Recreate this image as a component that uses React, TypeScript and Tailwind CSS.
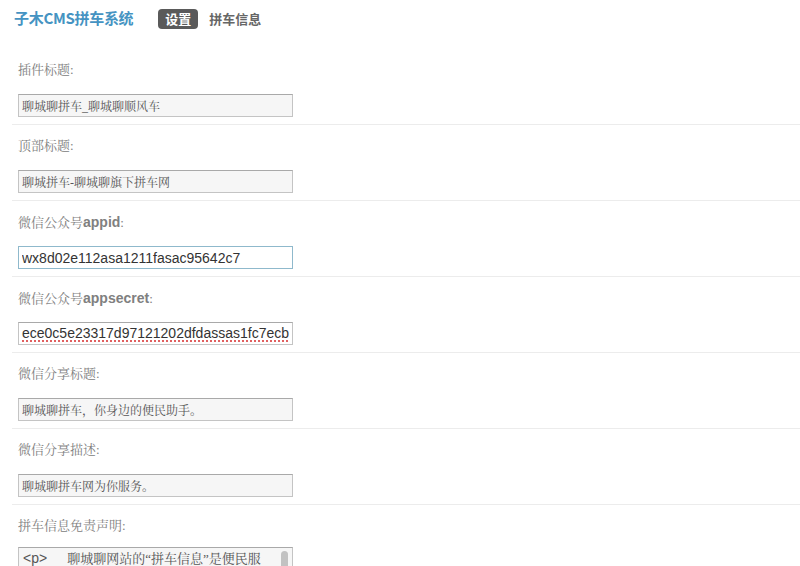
import React, { useState } from 'react';

const cjk = { fontFamily: '"Liberation Serif", "Noto Serif CJK SC", "Noto Sans CJK SC", serif' };

type Field = {
  label: React.ReactNode;
  value: string;
  kind?: 'plain' | 'focus' | 'spell';
};

const fields: Field[] = [
  { label: '插件标题:', value: '聊城聊拼车_聊城聊顺风车' },
  { label: '顶部标题:', value: '聊城拼车-聊城聊旗下拼车网' },
  {
    label: (
      <>
        微信公众号<span className="font-bold text-[14px] font-['Liberation_Sans',sans-serif]">appid</span>:
      </>
    ),
    value: 'wx8d02e112asa1211fasac95642c7',
    kind: 'focus',
  },
  {
    label: (
      <>
        微信公众号<span className="font-bold text-[14px] font-['Liberation_Sans',sans-serif]">appsecret</span>:
      </>
    ),
    value: 'ece0c5e23317d97121202dfdassas1fc7ecb',
    kind: 'spell',
  },
  { label: '微信分享标题:', value: '聊城聊拼车，你身边的便民助手。' },
  { label: '微信分享描述:', value: '聊城聊拼车网为你服务。' },
];

const Row: React.FC<{ field: Field }> = ({ field }) => {
  const [value, setValue] = useState(field.value);
  const base = 'block w-[275px] h-[23px] px-[3px] outline-none';
  let input: React.ReactNode = (
    <input
      value={value}
      onChange={(e) => setValue(e.target.value)}
      spellCheck={false}
      className={`mt-[16px] ${base} bg-[#f6f6f6] border border-[#c4c4c4] border-t-[#a9a9a9] text-[12px] text-[#555]`}
      style={cjk}
    />
  );
  if (field.kind === 'focus')
    input = (
      <input
        value={value}
        onChange={(e) => setValue(e.target.value)}
        spellCheck={false}
        className={`mt-[16px] ${base} bg-white border border-[#8fb9cc] text-[14px] text-[#333] font-['Liberation_Sans',sans-serif]`}
      />
    );
  if (field.kind === 'spell')
    input = (
      <div
        className={`mt-[16px] ${base} bg-white border border-[#c4c4c4] border-t-[#a9a9a9] text-[14px] leading-[21px] text-[#333] font-['Liberation_Sans',sans-serif] whitespace-nowrap overflow-hidden`}
      >
        <span className="underline decoration-dotted decoration-[#e06060] decoration-2 underline-offset-2">{value}</span>
      </div>
    );
  return (
    <div className="ml-3 pl-[6px] pt-[13px] pb-[7px] border-b border-[#ececec]">
      <div className="h-4 leading-4 text-[13px] text-[#808080]" style={cjk}>
        {field.label}
      </div>
      {input}
    </div>
  );
};

export default function App() {
  return (
    <div className="min-h-screen bg-white overflow-hidden">
      {/* top bar */}
      <div className="h-[37px] flex items-center pl-[14px]">
        <span className="text-[15px] font-bold text-[#4593c2] font-['Noto_Sans_CJK_SC',sans-serif] tracking-[-0.3px]">
          子木CMS拼车系统
        </span>
        <span className="ml-[25px] h-[20px] px-[7px] rounded-[4px] bg-[#5a5a5a] text-white text-[13px] font-bold leading-[20px] font-['Noto_Sans_CJK_SC',sans-serif]">
          设置
        </span>
        <span className="ml-[11px] text-[13px] font-bold text-[#666] font-['Noto_Sans_CJK_SC',sans-serif]">
          拼车信息
        </span>
      </div>

      <div className="pt-[12px]">
        {fields.map((f, i) => (
          <Row key={i} field={f} />
        ))}
        <div className="ml-3 pl-[6px] pt-[13px]">
          <div className="h-4 leading-4 text-[13px] text-[#808080]" style={cjk}>
            拼车信息免责声明:
          </div>
          <div className="mt-[13px] w-[275px] h-[60px] bg-[#f6f6f6] border border-[#c4c4c4] border-t-[#a9a9a9] flex">
            <div className="flex-1 px-[4px] pt-[1px] leading-[18px] text-[13px] text-[#555] whitespace-nowrap overflow-hidden" style={cjk}>
              <span className="font-['Liberation_Sans',sans-serif] text-[14px]">&lt;p&gt;</span>
              <span className="ml-[20px]">聊城聊网站的“拼车信息”是便民服</span>
            </div>
            <div className="w-[12px] pt-[3px] pr-[3px] flex justify-center">
              <div className="w-[7px] h-[30px] rounded-full bg-[#c2c2c2]" />
            </div>
          </div>
        </div>
      </div>
    </div>
  );
}
